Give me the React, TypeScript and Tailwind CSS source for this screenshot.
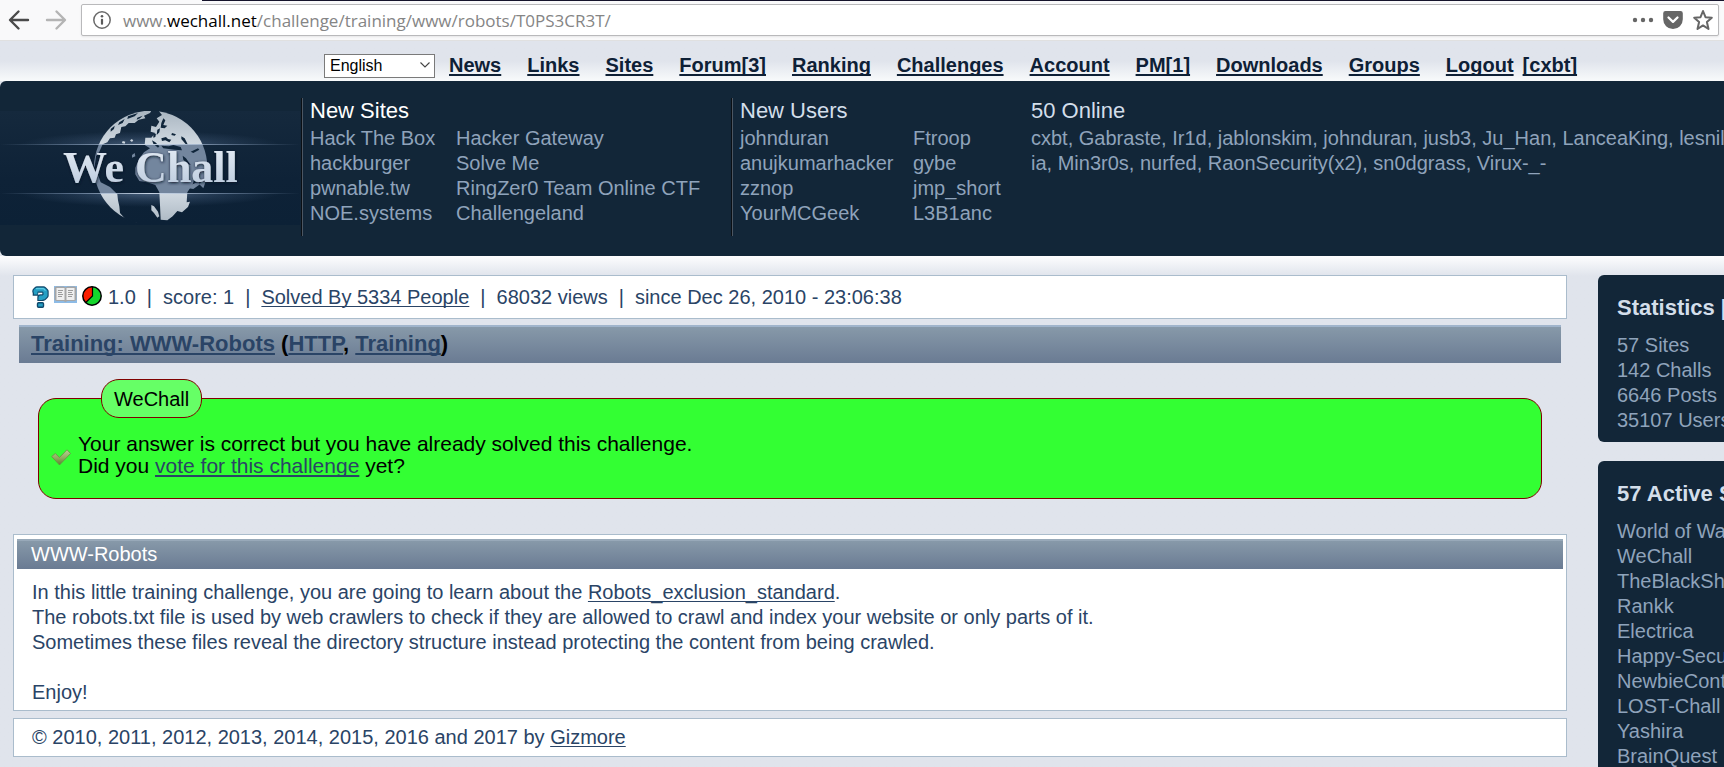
import React from "react";

const newSites = [
  ["Hack The Box", "Hacker Gateway"],
  ["hackburger", "Solve Me"],
  ["pwnable.tw", "RingZer0 Team Online CTF"],
  ["NOE.systems", "Challengeland"],
];
const newUsers = [
  ["johnduran", "Ftroop"],
  ["anujkumarhacker", "gybe"],
  ["zznop", "jmp_short"],
  ["YourMCGeek", "L3B1anc"],
];
const nav = ["News", "Links", "Sites", "Forum[3]", "Ranking", "Challenges", "Account", "PM[1]", "Downloads", "Groups"];
const stats = ["57 Sites", "142 Challs", "6646 Posts", "35107 Users"];
const activeSites = [
  "World of Wargame",
  "WeChall",
  "TheBlackSheep",
  "Rankk",
  "Electrica",
  "Happy-Security",
  "NewbieContest",
  "LOST-Chall",
  "Yashira",
  "BrainQuest",
];

function Toolbar() {
  return (
    <div className="flex h-[41px] items-center border-b border-[#e0e0e0] bg-[#f9f9fa] pl-2 pr-[5px] text-[#4a4a4a]">
      <button aria-label="Back" className="h-6 w-6">
        <svg viewBox="0 0 24 24" className="h-6 w-6" fill="none" stroke="#4a4a4a" strokeWidth="2.4" strokeLinecap="round" strokeLinejoin="round">
          <path d="M20 12H2.5M10.500 3.500L2 12l8.500 8.500" />
        </svg>
      </button>
      <button aria-label="Forward" className="ml-3 h-6 w-6" disabled>
        <svg viewBox="0 0 24 24" className="h-6 w-6" fill="none" stroke="#b4b4b4" strokeWidth="2.4" strokeLinecap="round" strokeLinejoin="round">
          <path d="M3 12h17.500M12.500 3.500L21 12l-8.500 8.500" />
        </svg>
      </button>
      <div className="ml-[13px] flex h-8 min-w-0 flex-1 items-center rounded-[2px] border border-[#b9b9bb] bg-white pl-[10px] pr-1 shadow-[0_1px_2px_rgba(0,0,0,0.08)]">
        <button aria-label="Site information" className="h-5 w-5">
          <svg viewBox="0 0 20 20" className="h-5 w-5">
            <circle cx="10" cy="10" r="8.2" fill="none" stroke="#6a6a6a" strokeWidth="1.5" />
            <circle cx="10" cy="6.300" r="1.300" fill="#5a5a5a" />
            <rect x="8.900" y="8.700" width="2.200" height="6" rx="1" fill="#5a5a5a" />
          </svg>
        </button>
        <div className="ml-[11px] flex-1 pt-px font-['Open_Sans',sans-serif] text-[17px] leading-6 whitespace-nowrap text-[#858585]">
          www.<span className="text-black">wechall.net</span>/challenge/training/www/robots/T0PS3CR3T/
        </div>
        <div className="flex items-center gap-2">
          <button aria-label="Page actions" className="h-[22px] w-[22px]">
            <svg viewBox="0 0 22 22" className="h-[22px] w-[22px]" fill="#666">
              <circle cx="3" cy="11" r="2.200" />
              <circle cx="11" cy="11" r="2.200" />
              <circle cx="19" cy="11" r="2.200" />
            </svg>
          </button>
          <button aria-label="Save to Pocket" className="h-[22px] w-[22px]">
            <svg viewBox="0 0 22 22" className="h-[22px] w-[22px]">
              <path d="M3.500 2h15a2.300 2.300 0 0 1 2.300 2.300v6a9.800 9.800 0 0 1-19.600 0v-6A2.300 2.300 0 0 1 3.500 2z" fill="#666" />
              <path d="M6.500 8.500l4.500 4.400 4.500-4.400" fill="none" stroke="#fff" strokeWidth="2.300" strokeLinecap="round" strokeLinejoin="round" />
            </svg>
          </button>
          <button aria-label="Bookmark" className="h-[22px] w-[22px]">
            <svg viewBox="0 0 22 22" className="h-[22px] w-[22px]" fill="none" stroke="#666" strokeWidth="2" strokeLinejoin="round">
              <path d="M11 2l2.500 6.200 6.300.5-4.900 4.300 1.600 7L11 16.400 5.500 20l1.600-7-4.900-4.300 6.300-.5z" />
            </svg>
          </button>
        </div>
      </div>
    </div>
  );
}

function Logo() {
  return (
    <svg viewBox="0 0 300 114" className="mt-0.5 h-[114px] w-[300px] shrink-0" role="img" aria-label="We Chall">
      <defs>
        <linearGradient id="lg-bg" x1="0" y1="0" x2="0" y2="1">
          <stop offset="0" stopColor="#15293d" />
          <stop offset="0.6" stopColor="#0e2237" />
          <stop offset="1" stopColor="#0c2136" />
        </linearGradient>
        <linearGradient id="lg-line" x1="0" y1="0" x2="1" y2="0">
          <stop offset="0" stopColor="#8fa6c4" stopOpacity="0" />
          <stop offset="0.25" stopColor="#8fa6c4" stopOpacity="0.6" />
          <stop offset="0.5" stopColor="#c9d6e6" />
          <stop offset="0.75" stopColor="#8fa6c4" stopOpacity="0.6" />
          <stop offset="1" stopColor="#8fa6c4" stopOpacity="0" />
        </linearGradient>
        <radialGradient id="lg-glow">
          <stop offset="0" stopColor="#7d97ba" stopOpacity="0.5" />
          <stop offset="0.6" stopColor="#5d789d" stopOpacity="0.2" />
          <stop offset="1" stopColor="#5d789d" stopOpacity="0" />
        </radialGradient>
        <linearGradient id="lg-text" x1="0" y1="0" x2="0" y2="1">
          <stop offset="0" stopColor="#e6edf5" />
          <stop offset="1" stopColor="#b8c8dc" />
        </linearGradient>
        <linearGradient id="lg-map" gradientUnits="userSpaceOnUse" x1="0" y1="18" x2="0" y2="358">
          <stop offset="0" stopColor="#aab6c1" />
          <stop offset="0.29" stopColor="#d0d9e1" />
          <stop offset="0.3" stopColor="#73869e" />
          <stop offset="0.72" stopColor="#73869e" />
          <stop offset="0.725" stopColor="#d0d9e1" />
          <stop offset="1" stopColor="#aab6c1" />
        </linearGradient>
        <clipPath id="lg-top"><rect width="300" height="33" /></clipPath>
        <clipPath id="lg-bottom"><rect y="83" width="300" height="31" /></clipPath>
        <clipPath id="lg-globe"><circle cx="272" cy="187" r="170" /></clipPath>
        <filter id="lg-shadow" x="-10%" y="-20%" width="120%" height="150%">
          <feDropShadow dx="0.5" dy="1" stdDeviation="1.500" floodColor="#0a1826" floodOpacity="1" />
        </filter>
      </defs>
      <rect width="300" height="114" fill="url(#lg-bg)" />
      <g clipPath="url(#lg-top)"><ellipse cx="150" cy="34" rx="130" ry="14" fill="url(#lg-glow)" /></g>
      <g clipPath="url(#lg-bottom)"><ellipse cx="150" cy="82" rx="130" ry="14" fill="url(#lg-glow)" /></g>
      <g transform="translate(60 -6) scale(0.33333)">
        <g clipPath="url(#lg-globe)" fill="url(#lg-map)">
          <path d="M98 190L95 120 160 20 232 10 276 14 270 24 252 32 256 40 236 44 224 54 206 54 196 64 184 66 180 84 168 88 164 98 150 100 142 112 128 118 118 140 108 154 104 184z" />
          <path d="M290 10L330 10 390 40 450 130 450 240 430 250 418 238 426 228 404 218 398 238 382 262 380 292 390 290 384 306 366 322 352 318 338 334 322 346 302 344 300 300 298 262 286 240 262 232 238 228 226 208 226 188 238 160 252 142 270 130 254 120 256 98 274 98 286 84 272 80 274 62 288 66 298 50 290 40 306 30z" />
          <path d="M96 190L112 204 122 232 150 246 172 268 174 286 178 304 180 324 198 344 216 352 238 355 238 370 150 350 90 260z" />
          <path d="M274 300l8 4 12 16 4 14-6 4-10-14-8-8zM188 108l8 2-2 6-8-2zM216 150l8-6 2 10-10 4zM210 106l6-4 4 6-6 2zM392 240l24-10 4 8-20 14-14-2z" />
        </g>
        <g clipPath="url(#lg-globe)" fill="#10263b">
          <path d="M204 34l30-10-10 10-22 8zM178 52l16-10-6 12-14 6zM152 72l12-10-2 10-10 8zM232 38l16-6-8 8-10 4z" />
          <path d="M304 54l6-14 6 6-6 14 12 2-8 8-12-2zM292 74l8-4-2 12-8 8zM280 88l8-2-2 10-6 2z" />
          <path d="M304 100l14-4 6 6 10 2-6 8-12-6-10 2zM304 122l22 2 14-4 22 6 4 10-22-2-34-4zM364 94l10 6 10 20-8-4-12-14zM368 152l10 8 14 20-8-2-14-14zM392 140l22-10 4 4-18 10zM276 106l10 6 12 12-4 4-14-12zM336 84l12 4-4 4-10-2z" />
        </g>
      </g>
      <rect y="33" width="300" height="1" fill="url(#lg-line)" />
      <rect y="82" width="300" height="1" fill="url(#lg-line)" />
      <text x="63" y="71" fontFamily="'Liberation Serif', serif" fontWeight="700" fontSize="44" fill="url(#lg-text)" filter="url(#lg-shadow)">
        We Chall
      </text>
    </svg>
  );
}

function Pairs({ rows, className }: { rows: string[][]; className: string }) {
  return (
    <ul className="text-[#8fa3bb]">
      {rows.map(([a, b]) => (
        <li key={a} className={className}>
          <a href="#">{a}</a>
          <a href="#">{b}</a>
        </li>
      ))}
    </ul>
  );
}

function Header() {
  return (
    <header className="flex items-center overflow-hidden rounded-l-md bg-[#122638] pt-[17px] pb-5 whitespace-nowrap">
      <div className="mr-0.5 flex h-[138px] items-center">
        <Logo />
      </div>
      <section className="h-[138px] w-[430px] shrink-0 border-l border-[#4c5662] pl-[7px] shadow-[-1px_0_0_#0a0f14]">
        <h2 className="mb-0.5 text-[22px] leading-[26px] text-white">New Sites</h2>
        <Pairs rows={newSites} className="grid grid-cols-[146px_auto]" />
      </section>
      <section className="h-[138px] w-[299px] shrink-0 border-l border-[#4c5662] pl-[7px] shadow-[-1px_0_0_#0a0f14]">
        <h2 className="mb-0.5 text-[22px] leading-[26px] text-[#d3deea]">New Users</h2>
        <Pairs rows={newUsers} className="grid grid-cols-[173px_auto]" />
      </section>
      <section className="h-[138px]">
        <h2 className="mb-0.5 text-[22px] leading-[26px] text-[#d3deea]">50 Online</h2>
        <p className="text-[#8fa3bb]">
          cxbt, Gabraste, Ir1d, jablonskim, johnduran, jusb3, Ju_Han, LanceaKing, lesnil
          <br />
          ia, Min3r0s, nurfed, RaonSecurity(x2), sn0dgrass, Virux-_-
        </p>
      </section>
    </header>
  );
}

function StatusIcons() {
  return (
    <div className="mr-[6px] flex items-start gap-[5px]">
      <svg viewBox="0 0 17 22" className="h-[22px] w-[17px]" fill="none" strokeLinejoin="round">
        <path d="M0.700 6.500h5.500M3.500 6.500V5L5 3.500h6.500L13.500 5.500v4L11.500 11.500H8.500V15" stroke="#10486b" strokeWidth="6.400" />
        <path d="M2 6.500h3.500M3.500 6.500V5L5 3.500h6.500L13.500 5.500v4L11.500 11.500H8.500V14" stroke="#259fc4" strokeWidth="4" />
        <path d="M4 2.700h7.500l2 2" stroke="#5fcbe4" strokeWidth="1.200" />
        <rect x="5.500" y="16.700" width="6" height="4.500" rx="1" fill="#259fc4" stroke="#10486b" strokeWidth="1.400" />
      </svg>
      <svg viewBox="0 0 23 17" className="h-[17px] w-[23px]">
        <rect width="23" height="17" fill="#8dbbe6" />
        <path d="M0.500 1.500l2-1h7l2 1 2-1h7l2 1v12.500l-2 1h-7l-2 1-2-1h-7l-2-1z" fill="#a6a6a6" />
        <rect x="2.500" y="2" width="8" height="12" fill="#efefef" />
        <rect x="12.500" y="2" width="8" height="12" fill="#efefef" />
        <path d="M4 4.500h5M4 6.500h4M4 8.500h5M4 10.500h4M14 4.500h5M14 6.500h4M14 8.500h5M14 10.500h4" stroke="#9c9c9c" strokeWidth="1" />
      </svg>
      <svg viewBox="0 0 20 20" className="h-5 w-5">
        <circle cx="10" cy="10" r="9.200" fill="#14d62c" />
        <path d="M10 10V0.800A9.200 9.200 0 0 0 3.800 16.800z" fill="#fb1e00" />
        <path d="M10.500 0.800V10L3.800 16.500" fill="none" stroke="#000" strokeWidth="1.200" />
        <circle cx="10" cy="10" r="9.200" fill="none" stroke="#000" strokeWidth="1.500" />
      </svg>
    </div>
  );
}

function Check() {
  return (
    <svg viewBox="0 0 20 17" className="mt-1 h-[17px] w-5 shrink-0">
      <defs>
        <linearGradient id="chk" x1="0" y1="0" x2="0" y2="1">
          <stop offset="0" stopColor="#b9cf96" />
          <stop offset="0.5" stopColor="#93b062" />
          <stop offset="1" stopColor="#5c7f33" />
        </linearGradient>
      </defs>
      <path d="M0.700 7.500l3.600-3 4.200 4L16 0.800l3.500 3.700L8.500 16z" fill="url(#chk)" stroke="#6b8f45" strokeWidth="0.800" strokeLinejoin="round" />
    </svg>
  );
}

const Bar = () => <span className="mx-[11px]">|</span>;

function Sidebox({ title, items }: { title: string; items: string[] }) {
  return (
    <section className="overflow-hidden rounded-l-md bg-[#122638] pt-[18px] pb-[9px] pl-[19px] whitespace-nowrap">
      <h2 className="mb-2.5 text-[22px] leading-[30px] font-bold text-[#d3deea]">{title}</h2>
      <ul className="text-[#8fa3bb]">
        {items.map((t) => (
          <li key={t}>
            <a href="#">{t}</a>
          </li>
        ))}
      </ul>
    </section>
  );
}

const thin = "underline decoration-1 underline-offset-2 [text-decoration-skip-ink:none]";
const thick = "text-[#2a4466] underline decoration-2 underline-offset-2 [text-decoration-skip-ink:none]";
const navLink = "underline decoration-2 underline-offset-2 [text-decoration-skip-ink:none]";

export default function App() {
  return (
    <div className="h-screen overflow-hidden bg-[#e0e4ec] font-['Liberation_Sans',Arial,sans-serif] text-[20px] leading-[25px]">
      <div className="relative">
        <Toolbar />
        <div className="absolute top-0 right-0 left-[202px] h-px bg-[#15132b]" />
      </div>
      <nav className="flex h-10 items-center bg-linear-to-b from-[#e0e4ec] from-50% to-[#f8fafb] pt-[9px] pl-[324px] pb-[3px] font-bold whitespace-nowrap text-[#0e2036]">
        <div className="relative mt-0.5 mr-[14px]">
          <select aria-label="Language" className="h-6 w-[111px] appearance-none border border-[#7a7a7a] bg-white pl-[5px] text-[16px] leading-[22px] font-normal text-black">
            <option>English</option>
          </select>
          <svg viewBox="0 0 10 6" className="pointer-events-none absolute top-[10px] right-[5px] h-[6px] w-[10px]" fill="none" stroke="#444" strokeWidth="1.100">
            <path d="M0.500 0.500L5 5 9.500 0.500" />
          </svg>
        </div>
        <div className="mt-0.5 flex gap-[26px]">
          {nav.map((n) => (
            <a key={n} href="#" className={navLink}>
              {n}
            </a>
          ))}
          <div className="flex gap-[9px]">
            <a href="#" className={navLink}>Logout</a>
            <a href="#" className={navLink}>[cxbt]</a>
          </div>
        </div>
      </nav>
      <Header />
      <div className="flex items-start bg-linear-to-b from-[#fdfdfe] to-[#e0e4ec] to-[20px] pt-[19px]">
        <main className="ml-[13px] min-w-0 flex-1 text-[#2a4466]">
          <div className="flex h-11 items-center border border-[#aabccc] bg-white pl-[18px]">
            <StatusIcons />
            1.0<Bar />score: 1<Bar />
            <a href="#" className={thin}>Solved By 5334 People</a>
            <Bar />68032 views<Bar />since Dec 26, 2010 - 23:06:38
          </div>
          <h1 className="mx-[6px] mt-[6px] border-t-2 border-[#a0b4cb] bg-linear-to-b from-[#8799a9] to-[#6a7b93] pt-1 pb-[6px] pl-3 text-[22px] leading-[26px] font-bold text-black">
            <a href="#" className={thick}>Training: WWW-Robots</a> (<a href="#" className={thick}>HTTP</a>,{" "}
            <a href="#" className={thick}>Training</a>)
          </h1>
          <div className="relative mx-[25px] mt-[35px] flex rounded-[18px] border border-[#800000] bg-[#33ff33] pt-[34px] pb-[21px] pl-3 text-[21px] leading-[22px] text-black">
            <div className="absolute -top-5 left-[62px] rounded-[18px] border border-[#800000] bg-[#66ff66] px-3 pt-[7px] pb-[5px] text-[20px] leading-[25px]">WeChall</div>
            <div className="flex items-center">
              <Check />
            </div>
            <p className="ml-[7px]">
              Your answer is correct but you have already solved this challenge.
              <br />
              Did you <a href="#" className={thick}>vote for this challenge</a> yet?
            </p>
          </div>
          <section className="mt-[35px] border border-[#aabccc] bg-white px-[3px] pt-1 pb-[5px]">
            <h2 className="border-t-2 border-[#98a9b9] bg-linear-to-b from-[#8799a9] to-[#6a7b93] pt-px pb-[2px] pl-[14px] text-white">WWW-Robots</h2>
            <div className="pt-[11px] pl-[15px]">
              <p>
                In this little training challenge, you are going to learn about the <a href="#" className={thin}>Robots_exclusion_standard</a>.
                <br />
                The robots.txt file is used by web crawlers to check if they are allowed to crawl and index your website or only parts of it.
                <br />
                Sometimes these files reveal the directory structure instead protecting the content from being crawled.
              </p>
              <p className="mt-[25px]">Enjoy!</p>
            </div>
          </section>
          <footer className="mt-[7px] border border-[#aabccc] bg-white py-[6px] pl-[18px]">
            © 2010, 2011, 2012, 2013, 2014, 2015, 2016 and 2017 by <a href="#" className={thin}>Gizmore</a>
          </footer>
        </main>
        <aside className="ml-[31px] flex w-[126px] shrink-0 flex-col gap-[19px]">
          <Sidebox title="Statistics [+]" items={stats} />
          <Sidebox title="57 Active Sites" items={activeSites} />
        </aside>
      </div>
    </div>
  );
}
